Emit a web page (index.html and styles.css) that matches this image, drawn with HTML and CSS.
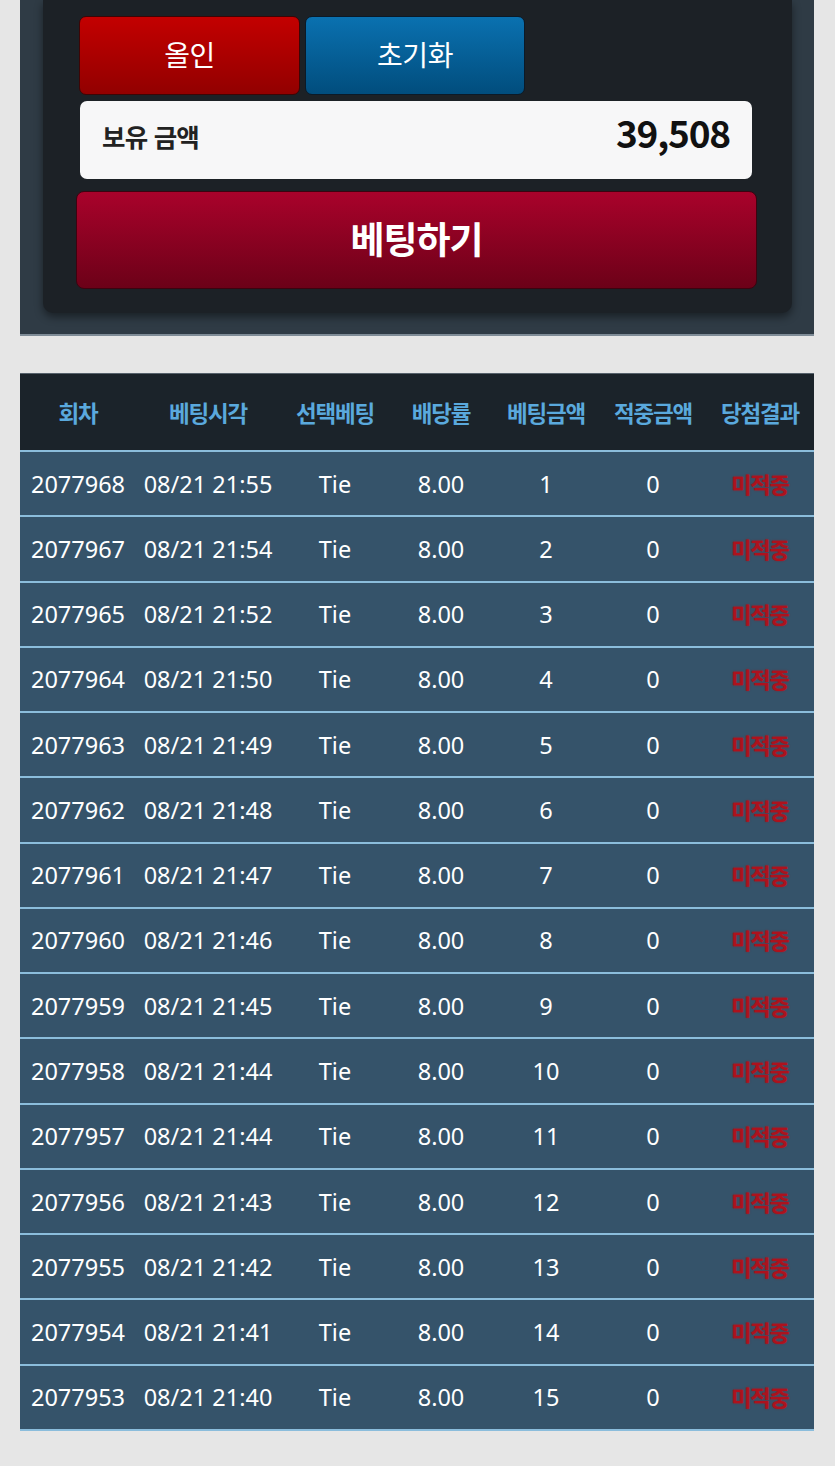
FILE: index.html
```html
<!DOCTYPE html>
<html lang="ko">
<head>
<meta charset="utf-8">
<title>베팅</title>
<link rel="stylesheet" href="styles.css">
</head>
<body>
<section class="panel">
  <div class="card">
    <div class="quick">
      <button class="btn btn-allin">올인</button>
      <button class="btn btn-reset">초기화</button>
    </div>
    <div class="balance">
      <span class="balance-label">보유 금액</span>
      <span class="balance-value">39,508</span>
    </div>
    <button class="bet">베팅하기</button>
  </div>
</section>

<section class="history">
  <div class="row head">
    <div>회차</div><div>베팅시각</div><div>선택베팅</div><div>배당률</div><div>베팅금액</div><div>적중금액</div><div>당첨결과</div>
  </div>
  <div class="row"><div>2077968</div><div>08/21 21:55</div><div>Tie</div><div>8.00</div><div>1</div><div>0</div><div class="miss">미적중</div></div>
  <div class="row"><div>2077967</div><div>08/21 21:54</div><div>Tie</div><div>8.00</div><div>2</div><div>0</div><div class="miss">미적중</div></div>
  <div class="row"><div>2077965</div><div>08/21 21:52</div><div>Tie</div><div>8.00</div><div>3</div><div>0</div><div class="miss">미적중</div></div>
  <div class="row"><div>2077964</div><div>08/21 21:50</div><div>Tie</div><div>8.00</div><div>4</div><div>0</div><div class="miss">미적중</div></div>
  <div class="row"><div>2077963</div><div>08/21 21:49</div><div>Tie</div><div>8.00</div><div>5</div><div>0</div><div class="miss">미적중</div></div>
  <div class="row"><div>2077962</div><div>08/21 21:48</div><div>Tie</div><div>8.00</div><div>6</div><div>0</div><div class="miss">미적중</div></div>
  <div class="row"><div>2077961</div><div>08/21 21:47</div><div>Tie</div><div>8.00</div><div>7</div><div>0</div><div class="miss">미적중</div></div>
  <div class="row"><div>2077960</div><div>08/21 21:46</div><div>Tie</div><div>8.00</div><div>8</div><div>0</div><div class="miss">미적중</div></div>
  <div class="row"><div>2077959</div><div>08/21 21:45</div><div>Tie</div><div>8.00</div><div>9</div><div>0</div><div class="miss">미적중</div></div>
  <div class="row"><div>2077958</div><div>08/21 21:44</div><div>Tie</div><div>8.00</div><div>10</div><div>0</div><div class="miss">미적중</div></div>
  <div class="row"><div>2077957</div><div>08/21 21:44</div><div>Tie</div><div>8.00</div><div>11</div><div>0</div><div class="miss">미적중</div></div>
  <div class="row"><div>2077956</div><div>08/21 21:43</div><div>Tie</div><div>8.00</div><div>12</div><div>0</div><div class="miss">미적중</div></div>
  <div class="row"><div>2077955</div><div>08/21 21:42</div><div>Tie</div><div>8.00</div><div>13</div><div>0</div><div class="miss">미적중</div></div>
  <div class="row"><div>2077954</div><div>08/21 21:41</div><div>Tie</div><div>8.00</div><div>14</div><div>0</div><div class="miss">미적중</div></div>
  <div class="row"><div>2077953</div><div>08/21 21:40</div><div>Tie</div><div>8.00</div><div>15</div><div>0</div><div class="miss">미적중</div></div>
</section>
</body>
</html>
```

FILE: styles.css
```css
* { box-sizing: border-box; }

body {
  margin: 0;
  background: #e6e6e6;
  font-family: "Noto Sans CJK KR", "Noto Sans", sans-serif;
}

.panel {
  margin: 0 21px 0 20px;
  background: #2f3b45;
  padding: 0 22px 21px 23px;
  border-bottom: 2px solid #7f8c97;
}

.card {
  background: #1c2126;
  border-radius: 0 0 10px 10px;
  box-shadow: 0 4px 8px rgba(0, 0, 0, 0.45);
  padding: 16px 35px 24px 33px;
}

.quick {
  display: flex;
  gap: 5px;
  margin-left: 3px;
}

.btn {
  width: 221px;
  height: 79px;
  border-radius: 7px;
  color: #fff;
  font-family: "Noto Sans CJK KR", sans-serif;
  font-size: 28px;
  font-weight: 400;
  letter-spacing: -0.5px;
  padding: 0 0 4px;
  cursor: pointer;
}

.btn-allin {
  background: linear-gradient(#c30000, #920000);
  border: 1px solid #3d0505;
}

.btn-reset {
  width: 220px;
  background: linear-gradient(#0a71b0, #014d7d);
  border: 1px solid #0b1a28;
}

.balance {
  margin: 6px 5px 0 4px;
  height: 78px;
  background: #f7f7f8;
  border-radius: 7px;
  display: flex;
  align-items: center;
  justify-content: space-between;
  padding: 0 22px 10px 22px;
}

.balance-label {
  font-size: 25.5px;
  font-weight: 700;
  color: #222;
  letter-spacing: -0.8px;
}

.balance-value {
  font-size: 37px;
  font-weight: 700;
  color: #111;
  letter-spacing: -1.2px;
  padding-bottom: 6px;
}

.bet {
  display: block;
  width: 100%;
  height: 98px;
  margin-top: 12px;
  background: linear-gradient(#a9022b, #6c0118);
  border: 1px solid #3d0310;
  border-radius: 8px;
  color: #fff;
  font-family: "Noto Sans CJK KR", sans-serif;
  font-size: 37px;
  font-weight: 700;
  letter-spacing: -1px;
  padding: 0 0 4px;
  cursor: pointer;
}

.history {
  margin: 37px 21px 0 20px;
}

.row {
  display: grid;
  grid-template-columns: 116px 144px 110px 102px 108px 106px 108px;
  height: 65.27px;
  background: #35536a;
  border-bottom: 2px solid #8bbddc;
  color: #fff;
  font-family: "Noto Sans", "Noto Sans CJK KR", sans-serif;
  font-size: 23.5px;
}

.row > div {
  display: flex;
  align-items: center;
  justify-content: center;
  white-space: nowrap;
}

.row.head {
  height: 79px;
  background: #1b232a;
  border-top: 1px solid #56616b;
  color: #5aa9dd;
  font-family: "Noto Sans CJK KR", sans-serif;
  font-size: 22.5px;
  font-weight: 700;
  letter-spacing: -1.2px;
}

.row .miss {
  color: #ad121d;
  font-family: "Noto Sans CJK KR", sans-serif;
  font-size: 22px;
  font-weight: 700;
  letter-spacing: -1px;
  padding-bottom: 2px;
  text-shadow: 0 0 1.5px rgba(173, 18, 29, 0.9);
}
```
